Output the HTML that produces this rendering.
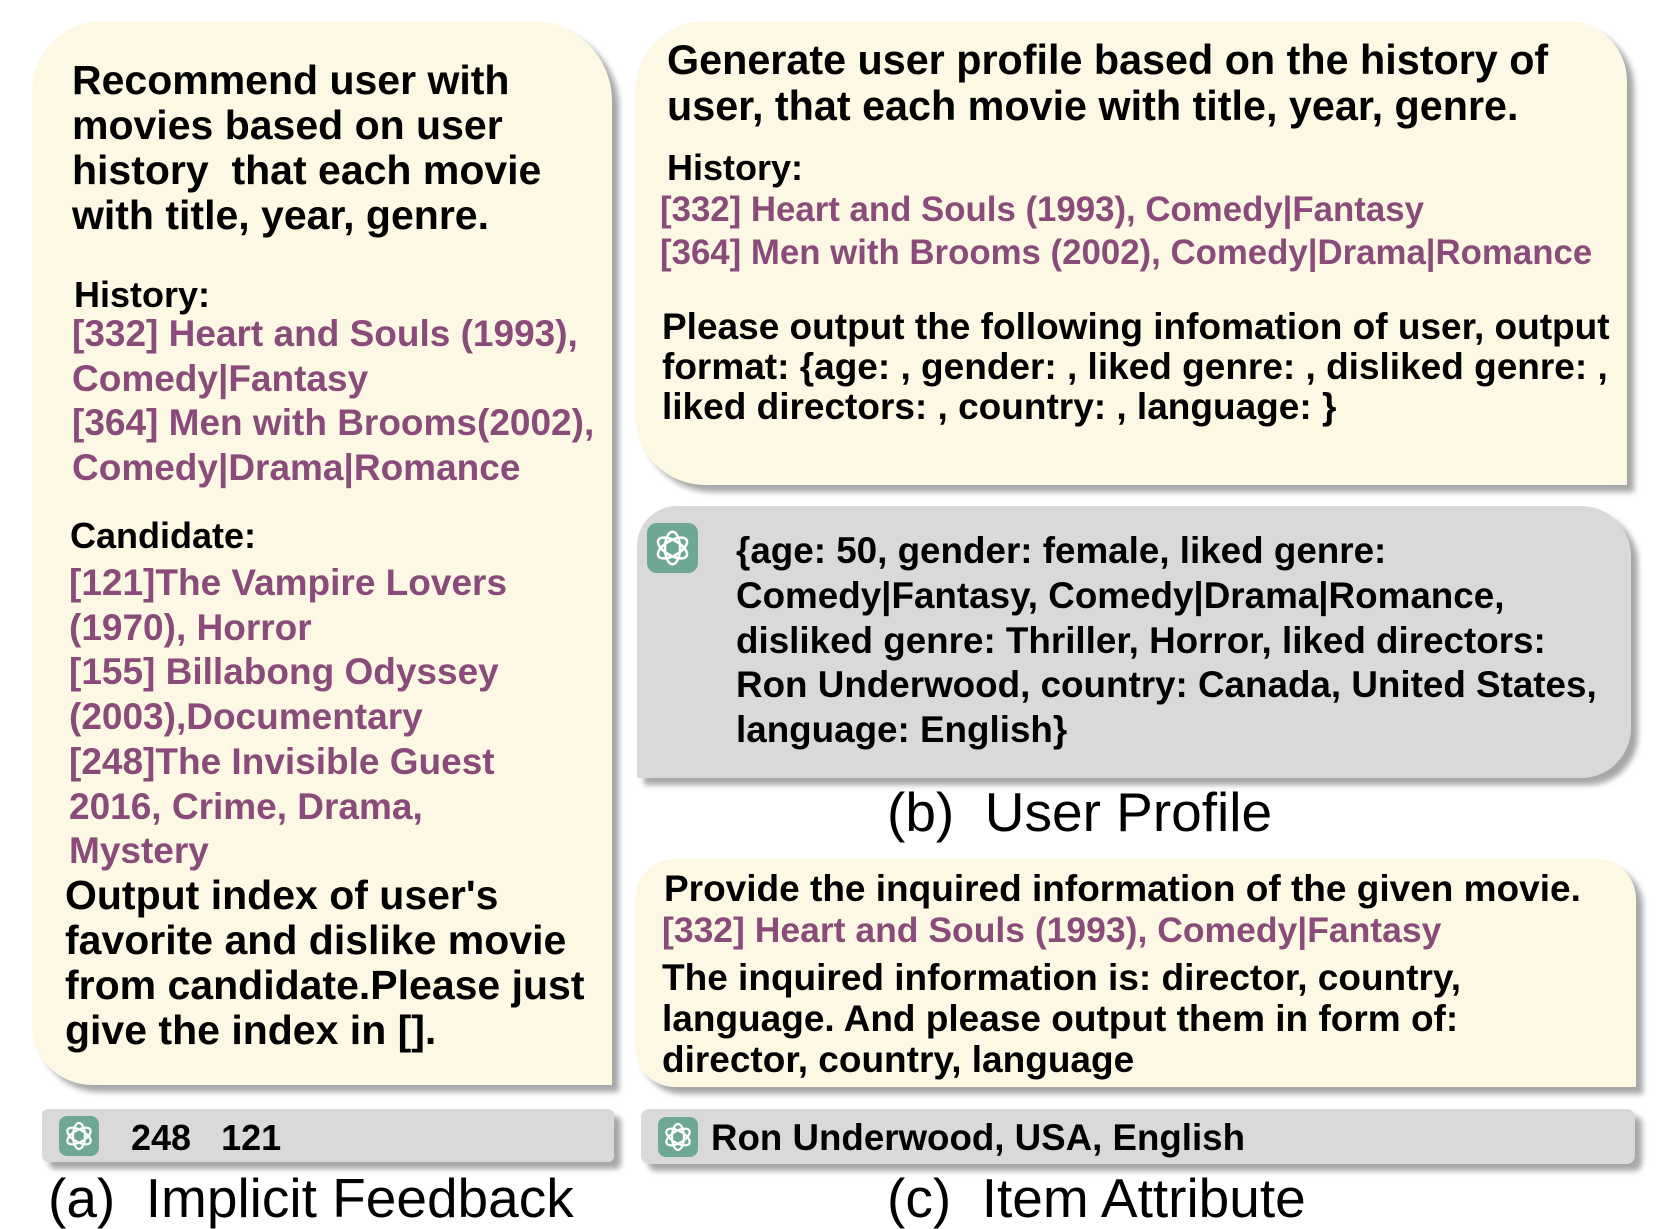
<!DOCTYPE html>
<html><head><meta charset="utf-8"><style>
html,body{margin:0;padding:0;background:#fff;}
body{width:1659px;height:1229px;position:relative;overflow:hidden;font-family:"Liberation Sans",Arial,sans-serif;}
.p{position:absolute;box-shadow:7px 7px 6px rgba(0,0,0,0.35);}
.cream{background:#fdf8e3;}
.gray{background:#d9d9d9;}
.t{position:absolute;white-space:nowrap;font-weight:bold;color:#000;}
.pu{color:#8b4b7a;}
.cap{position:absolute;white-space:nowrap;font-size:55px;line-height:60px;color:#000;}
.ic{position:absolute;background:#6fa892;border-radius:8px;}
.ic svg{width:100%;height:100%;display:block;}
</style></head><body>

<div class="p cream" style="left:32px;top:21px;width:580px;height:1064px;border-radius:70px 80px 0 60px;"></div>
<div class="t" style="left:72px;top:58px;font-size:41px;line-height:45px;">Recommend user with<br>movies based on user<br>history&nbsp; that each movie<br>with title, year, genre.</div>
<div class="t" style="left:74px;top:275px;font-size:36px;line-height:40px;">History:</div>
<div class="t pu" style="left:72px;top:312px;font-size:37px;line-height:44.5px;">[332] Heart and Souls (1993),<br>Comedy|Fantasy<br>[364] Men with Brooms(2002),<br>Comedy|Drama|Romance</div>
<div class="t" style="left:70px;top:516px;font-size:36px;line-height:40px;">Candidate:</div>
<div class="t pu" style="left:69px;top:561px;font-size:37px;line-height:44.7px;">[121]The Vampire Lovers<br>(1970), Horror<br>[155] Billabong Odyssey<br>(2003),Documentary<br>[248]The Invisible Guest<br>2016, Crime, Drama,<br>Mystery</div>
<div class="t" style="left:65px;top:873px;font-size:41px;line-height:45px;">Output index of user's<br>favorite and dislike movie<br>from candidate.Please just<br>give the index in [].</div>

<div class="p gray" style="left:42px;top:1109px;width:572px;height:53px;border-radius:6px;"></div>
<div class="ic" style="left:59px;top:1116px;width:40px;height:40px;"><svg viewBox="0 0 40 40"><g fill="none" stroke="#fff" stroke-width="2.2"><ellipse cx="20" cy="20" rx="6" ry="13"/><ellipse cx="20" cy="20" rx="6" ry="13" transform="rotate(60 20 20)"/><ellipse cx="20" cy="20" rx="6" ry="13" transform="rotate(120 20 20)"/></g></svg></div>
<div class="t" style="left:131px;top:1118px;font-size:36px;line-height:40px;">248&nbsp;&nbsp; 121</div>
<div class="cap" style="left:48px;top:1168px;">(a)&nbsp; Implicit Feedback</div>

<div class="p cream" style="left:635px;top:21px;width:992px;height:464px;border-radius:70px 60px 0 70px;"></div>
<div class="t" style="left:667px;top:37px;font-size:41.3px;line-height:46px;">Generate user profile based on the history of<br>user, that each movie with title, year, genre.</div>
<div class="t" style="left:667px;top:148px;font-size:36px;line-height:40px;">History:</div>
<div class="t pu" style="left:660px;top:188px;font-size:34.8px;line-height:43px;">[332] Heart and Souls (1993), Comedy|Fantasy<br>[364] Men with Brooms (2002), Comedy|Drama|Romance</div>
<div class="t" style="left:662px;top:307px;font-size:37px;line-height:40px;">Please output the following infomation of user, output<br>format: {age: , gender: , liked genre: , disliked genre: ,<br>liked directors: , country: , language: }</div>

<div class="p gray" style="left:637px;top:506px;width:994px;height:272px;border-radius:40px 50px 50px 0;"></div>
<div class="ic" style="left:647px;top:523px;width:51px;height:50px;border-radius:10px;"><svg viewBox="0 0 40 40"><g fill="none" stroke="#fff" stroke-width="2"><ellipse cx="20" cy="20" rx="6" ry="13"/><ellipse cx="20" cy="20" rx="6" ry="13" transform="rotate(60 20 20)"/><ellipse cx="20" cy="20" rx="6" ry="13" transform="rotate(120 20 20)"/></g></svg></div>
<div class="t" style="left:736px;top:529px;font-size:36.8px;line-height:44.75px;">{age: 50, gender: female, liked genre:<br>Comedy|Fantasy, Comedy|Drama|Romance,<br>disliked genre: Thriller, Horror, liked directors:<br>Ron Underwood, country: Canada, United States,<br>language: English}</div>
<div class="cap" style="left:887px;top:782px;">(b)&nbsp; User Profile</div>

<div class="p cream" style="left:635px;top:859px;width:1001px;height:228px;border-radius:40px 40px 0 40px;"></div>
<div class="t" style="left:664px;top:869px;font-size:37px;line-height:40px;">Provide the inquired information of the given movie.</div>
<div class="t pu" style="left:662px;top:910px;font-size:35.5px;line-height:40px;">[332] Heart and Souls (1993), Comedy|Fantasy</div>
<div class="t" style="left:662px;top:957px;font-size:37px;line-height:41px;">The inquired information is: director, country,<br>language. And please output them in form of:<br>director, country, language</div>

<div class="p gray" style="left:641px;top:1109px;width:994px;height:55px;border-radius:8px;"></div>
<div class="ic" style="left:658px;top:1117px;width:40px;height:40px;"><svg viewBox="0 0 40 40"><g fill="none" stroke="#fff" stroke-width="2.2"><ellipse cx="20" cy="20" rx="6" ry="13"/><ellipse cx="20" cy="20" rx="6" ry="13" transform="rotate(60 20 20)"/><ellipse cx="20" cy="20" rx="6" ry="13" transform="rotate(120 20 20)"/></g></svg></div>
<div class="t" style="left:711px;top:1118px;font-size:36.7px;line-height:40px;">Ron Underwood, USA, English</div>
<div class="cap" style="left:887px;top:1168px;">(c)&nbsp; Item Attribute</div>

</body></html>
